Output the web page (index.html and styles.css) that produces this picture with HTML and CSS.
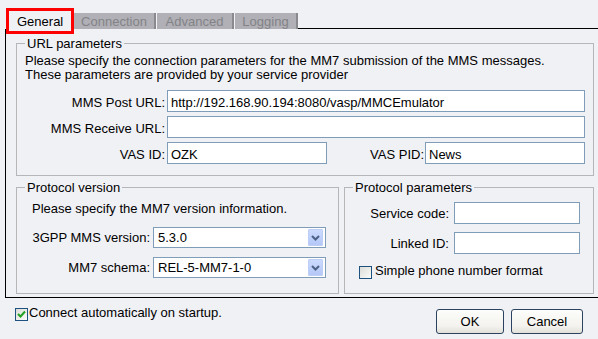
FILE: index.html
```html
<!DOCTYPE html>
<html lang="en">
<head>
  <meta charset="UTF-8" />
  <title>MM7 connection settings</title>
  <link rel="stylesheet" href="styles.css">
</head>
<body>

  <div class="tabs">
    <div class="tab tab-active">General</div>
    <div class="tab tab-connection">Connection</div>
    <div class="tab tab-advanced">Advanced</div>
    <div class="tab tab-logging">Logging</div>
    <div class="tab-fill"></div>
  </div>

  <div class="panel">
    <fieldset class="group group-url">
      <legend>URL parameters</legend>
      <p class="hint">Please specify the connection parameters for the MM7 submission of the MMS messages.<br>These parameters are provided by your service provider</p>
      <div class="url-form">
        <label>MMS Post URL:</label>
        <input class="field" type="text" value="http://192.168.90.194:8080/vasp/MMCEmulator">
        <label>MMS Receive URL:</label>
        <input class="field" type="text" value="">
        <label>VAS ID:</label>
        <div class="vas-row">
          <input class="field field-short" type="text" value="OZK">
          <label class="vas-pid">VAS PID:</label>
          <input class="field field-short" type="text" value="News">
        </div>
      </div>
    </fieldset>

    <div class="group-row">
      <fieldset class="group group-version">
        <legend>Protocol version</legend>
        <p class="hint hint-version">Please specify the MM7 version information.</p>
        <div class="version-form">
          <label>3GPP MMS version:</label>
          <div class="select">
            <span class="select-value">5.3.0</span>
            <span class="select-btn">
              <svg width="9" height="6" viewBox="0 0 9 6"><polyline points="1,1 4.5,4.5 8,1" fill="none" stroke="#4d6185" stroke-width="2"/></svg>
            </span>
          </div>
          <label>MM7 schema:</label>
          <div class="select">
            <span class="select-value">REL-5-MM7-1-0</span>
            <span class="select-btn">
              <svg width="9" height="6" viewBox="0 0 9 6"><polyline points="1,1 4.5,4.5 8,1" fill="none" stroke="#4d6185" stroke-width="2"/></svg>
            </span>
          </div>
        </div>
      </fieldset>

      <fieldset class="group group-params">
        <legend>Protocol parameters</legend>
        <div class="params-form">
          <label>Service code:</label>
          <input class="field" type="text" value="">
          <label>Linked ID:</label>
          <input class="field" type="text" value="">
        </div>
        <div class="check-row check-row-params">
          <span class="check"></span>
          <span>Simple phone number format</span>
        </div>
      </fieldset>
    </div>
  </div>

  <div class="footer">
    <div class="check-row">
      <span class="check check-on">
        <svg width="11" height="11" viewBox="0 0 11 11"><polyline points="2,5 4.5,7.5 9,2.5" fill="none" stroke="#21a121" stroke-width="2"/></svg>
      </span>
      <span>Connect automatically on startup.</span>
    </div>
    <div class="buttons">
      <button class="btn btn-ok">OK</button>
      <button class="btn btn-cancel">Cancel</button>
    </div>
  </div>

</body>
</html>
```

FILE: styles.css
```css
html, body {
  margin: 0;
  padding: 0;
  background: #f0f1f5;
  font-family: "Liberation Sans", Arial, sans-serif;
  font-size: 13px;
  line-height: 15px;
  color: #000;
}

/* tab strip */
.tabs {
  display: flex;
  align-items: flex-start;
  padding: 8px 0 0 6px;
}

.tab {
  box-sizing: border-box;
  height: 16px;
  margin-top: 5px;
  margin-right: 1px;
  padding-top: 1px;
  background: #b0b0b6;
  border-right: 2px solid #8a8a8e;
  color: #838387;
  text-align: center;
}

.tab-active {
  position: relative;
  z-index: 1;
  width: 68px;
  height: 26px;
  margin: 0 0 -5px 0;
  padding: 3px 0 0 8px;
  border: 3px solid #ff0000;
  background: transparent;
  color: #000;
  text-align: left;
}

.tab-connection { width: 82px; }
.tab-advanced { width: 77px; }
.tab-logging { width: 63px; margin-right: 0; }

.tab-fill {
  flex: 1;
  box-sizing: border-box;
  height: 21px;
  border-bottom: 1px solid #000;
}

/* panel */
.panel {
  margin-left: 5px;
  border-left: 1px solid #000;
  border-bottom: 1px solid #000;
  padding: 7px 4px 3px 10px;
}

.group {
  box-sizing: border-box;
  min-width: 0;
  margin: 0;
  padding: 3px 8px 11px 8px;
  border: 1px solid #b6b6b8;
}

.group legend {
  padding: 0 2px;
  line-height: 15px;
}

.hint {
  margin: 0;
  line-height: 14px;
}

.field {
  box-sizing: border-box;
  height: 22px;
  margin: 0;
  padding: 4px 3px 1px 3px;
  border: 1px solid #7f9db9;
  background: #fff;
  font: inherit;
  line-height: 15px;
  color: #000;
  outline: none;
}

.url-form {
  display: grid;
  grid-template-columns: 140px 1fr;
  column-gap: 2px;
  row-gap: 4px;
  margin-top: 8px;
  align-items: baseline;
}

.url-form > label {
  text-align: right;
}

.url-form .field {
  width: 100%;
}

.vas-row {
  display: flex;
  align-items: baseline;
}

.url-form .field-short {
  width: 160px;
}

.vas-pid {
  flex: 1;
  margin-right: 1px;
  text-align: right;
}

/* protocol boxes */
.group-row {
  display: flex;
  gap: 5px;
  margin-top: 4px;
}

.group-version {
  width: 323px;
  padding: 7px 8px 15px 8px;
}

.hint-version {
  padding-left: 7px;
}

.version-form {
  display: grid;
  grid-template-columns: 118px 173px;
  column-gap: 3px;
  row-gap: 9px;
  margin-top: 11px;
  padding-left: 7px;
  align-items: baseline;
}

.version-form > label {
  text-align: right;
}

.select {
  display: flex;
  box-sizing: border-box;
  height: 21px;
  border: 1px solid #7f9db9;
  background: #fff;
}

.select-value {
  flex: 1;
  padding: 2px 0 0 4px;
  line-height: 15px;
}

.select-btn {
  display: flex;
  align-items: center;
  justify-content: center;
  width: 15px;
  margin: 1px 2px 1px 0;
  border-radius: 2px;
  background: linear-gradient(#cddbfe, #b2c6f7);
  box-shadow: inset 0 0 0 1px #bccdf6;
}

.group-params {
  flex: 1;
  padding: 7px 13px 10px 8px;
}

.params-form {
  display: grid;
  grid-template-columns: 1fr 126px;
  column-gap: 5px;
  row-gap: 8px;
  align-items: center;
}

.params-form > label {
  text-align: right;
}

.params-form .field {
  width: 100%;
}

.check-row {
  display: flex;
  align-items: flex-start;
}

.check-row-params {
  margin: 9px 0 0 6px;
}

.check {
  display: flex;
  align-items: center;
  justify-content: center;
  box-sizing: border-box;
  width: 13px;
  height: 13px;
  margin: 3px 3px 0 0;
  border: 1px solid #1c5180;
  background: linear-gradient(135deg, #dcdcd7, #fbfbf9);
}

.check-on {
  margin-right: 1px;
}

/* bottom bar */
.footer {
  display: flex;
  justify-content: space-between;
  align-items: flex-start;
  padding: 7px 15px 0 15px;
}

.buttons {
  display: flex;
  gap: 7px;
  margin-top: 4px;
}

.btn {
  box-sizing: border-box;
  height: 25px;
  padding: 0;
  border: 1px solid #2b4260;
  border-radius: 3px;
  background: linear-gradient(#fdfdfb, #f3f2ee 70%, #e2e0d8);
  font: inherit;
  line-height: 15px;
  color: #000;
}

.btn-ok { width: 68px; }
.btn-cancel { width: 72px; }
```
